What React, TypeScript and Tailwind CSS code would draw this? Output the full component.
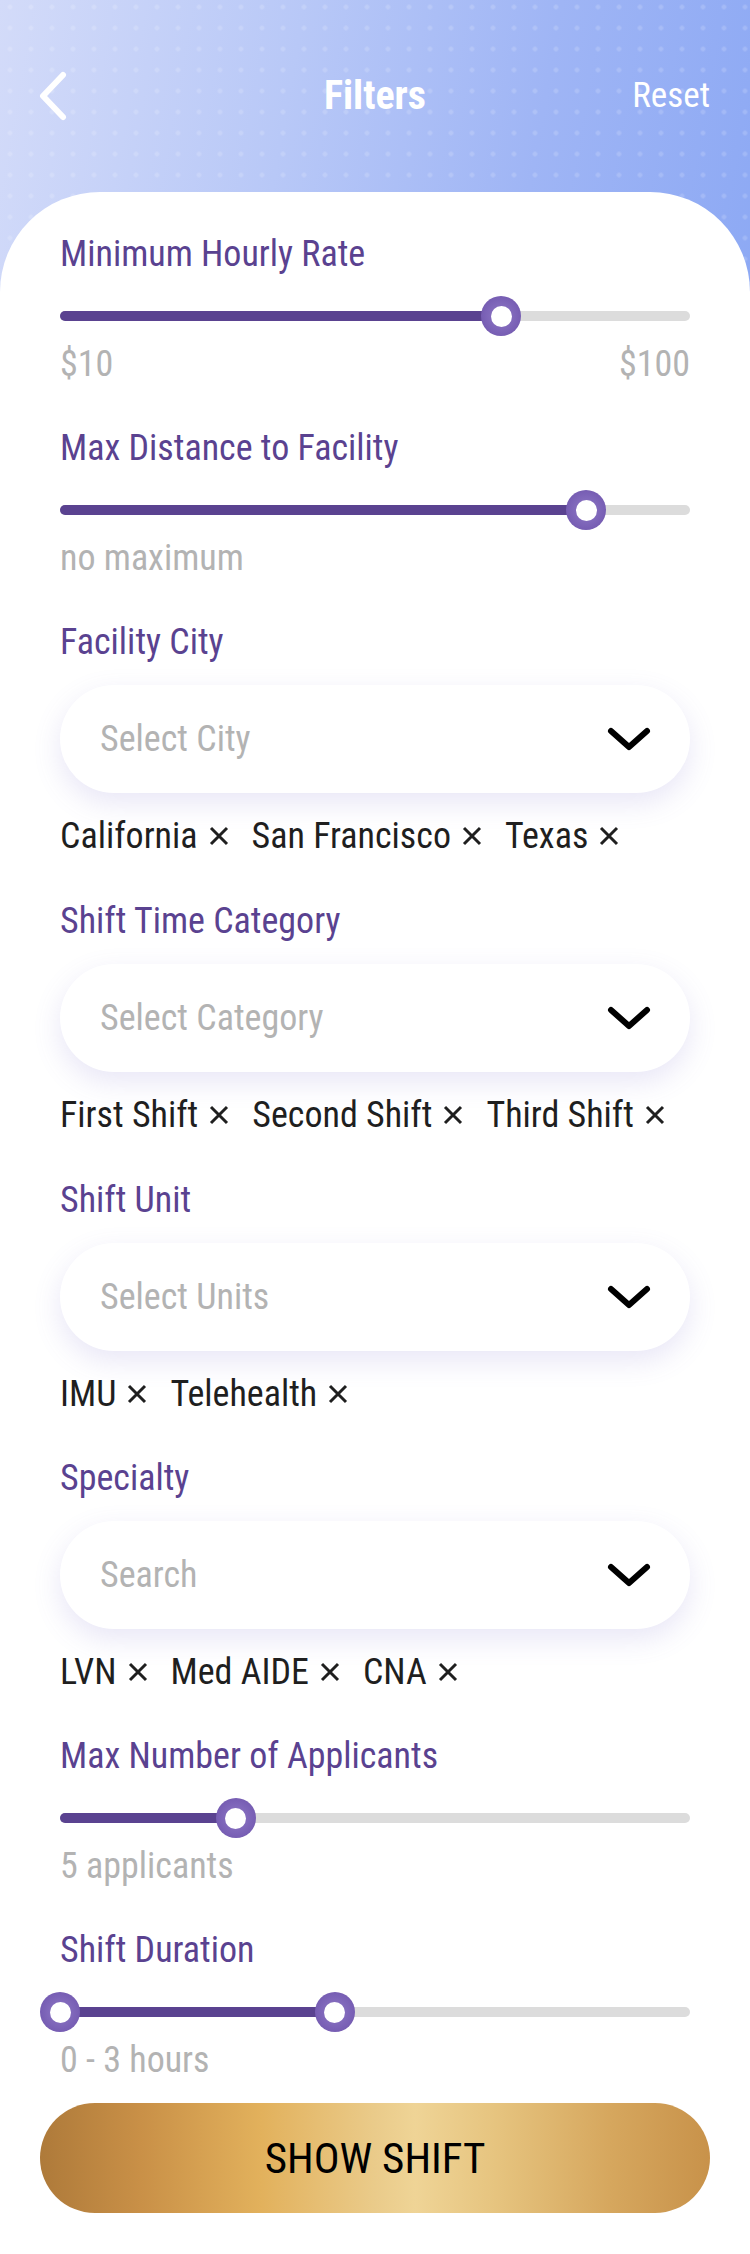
import React from "react";

const FONT = "font-['Roboto_Condensed','Liberation_Sans_Narrow',Roboto,sans-serif]";

function Label({ children }: { children: React.ReactNode }) {
  return <div className="text-[36px] leading-[40px] text-[#5a4290]">{children}</div>;
}

function Sub({ children, right }: { children: React.ReactNode; right?: React.ReactNode }) {
  return (
    <div className="mt-[8px] flex justify-between text-[36px] leading-[40px] text-[#b3b3b3]">
      <span>{children}</span>
      {right ? <span>{right}</span> : null}
    </div>
  );
}

function Thumb({ pct }: { pct: number }) {
  return (
    <div
      className="absolute top-1/2 flex h-[40px] w-[40px] -translate-x-1/2 -translate-y-1/2 items-center justify-center rounded-full bg-[radial-gradient(circle,#8f79c6_0%,#7a61b6_60%,#6c53a8_100%)]"
      style={{ left: `${pct}%` }}
    >
      <div className="h-[21px] w-[21px] rounded-full bg-white" />
    </div>
  );
}

function Slider({ from = 0, to, range = false }: { from?: number; to: number; range?: boolean }) {
  return (
    <div className="relative mt-[22px] h-[40px]">
      <div className="absolute left-0 right-0 top-1/2 h-[10px] -translate-y-1/2 rounded-full bg-[#dcdcdc]" />
      <div
        className="absolute top-1/2 h-[10px] -translate-y-1/2 rounded-full bg-[#5a4290]"
        style={{ left: `${from}%`, width: `${to - from}%` }}
      />
      {range ? <Thumb pct={from} /> : null}
      <Thumb pct={to} />
    </div>
  );
}

function XIcon() {
  return (
    <svg width="22" height="22" viewBox="0 0 22 22" className="shrink-0">
      <path d="M3 3 L19 19 M19 3 L3 19" stroke="#1f1f1f" strokeWidth="3" />
    </svg>
  );
}

function Dropdown({ placeholder, tags }: { placeholder: string; tags: string[] }) {
  return (
    <>
      <div className="mt-[23px] flex h-[108px] items-center justify-between rounded-full bg-white pl-[40px] pr-[38px] shadow-[0_10px_28px_rgba(110,100,200,0.16)]">
        <span className="text-[36px] leading-[40px] text-[#b3b3b3]">{placeholder}</span>
        <svg width="46" height="26" viewBox="0 0 46 26">
          <path d="M5 5 L23 21 L41 5" fill="none" stroke="#000" strokeWidth="6" strokeLinecap="round" strokeLinejoin="round" />
        </svg>
      </div>
      <div className="mt-[23px] flex items-center gap-[22px] text-[36px] leading-[40px] text-[#1f1f1f]">
        {tags.map((t) => (
          <div key={t} className="flex items-center gap-[10px]">
            <span>{t}</span>
            <XIcon />
          </div>
        ))}
      </div>
    </>
  );
}

export default function App() {
  return (
    <div className={`min-h-[2254px] w-[750px] bg-white ${FONT} [font-stretch:condensed]`}>
      <div className="h-[300px] bg-[radial-gradient(circle,rgba(255,255,255,0.16)_2px,transparent_2.6px),linear-gradient(100deg,#d3dbf9_0%,#b8c8f7_38%,#9fb5f5_70%,#8da9f4_100%)] bg-[length:21px_21px,100%_100%] bg-[position:-0.5px_-3.5px,0_0]">
        <div className="relative flex h-[192px] items-center justify-center">
          <svg className="absolute left-[36px] top-[70px]" width="36" height="54" viewBox="0 0 36 54">
            <path d="M27 5 L7 26 L27 47" fill="none" stroke="#fff" strokeWidth="6" strokeLinecap="round" strokeLinejoin="round" />
          </svg>
          <div className="text-[40px] font-bold leading-[44px] text-white">Filters</div>
          <div className="absolute right-[40px] top-[74px] text-[35px] leading-[44px] text-white">Reset</div>
        </div>
      </div>
      <div className="-mt-[108px] rounded-t-[100px] bg-white px-[60px] pb-[46px] pt-[42px]">
        <div className="flex flex-col">
          <Label>Minimum Hourly Rate</Label>
          <Slider to={70} />
          <Sub right="$100">$10</Sub>
        </div>
        <div className="mt-[44px] flex flex-col">
          <Label>Max Distance to Facility</Label>
          <Slider to={83.5} />
          <Sub>no maximum</Sub>
        </div>
        <div className="mt-[44px] flex flex-col">
          <Label>Facility City</Label>
          <Dropdown placeholder="Select City" tags={["California", "San Francisco", "Texas"]} />
        </div>
        <div className="mt-[45px] flex flex-col">
          <Label>Shift Time Category</Label>
          <Dropdown placeholder="Select Category" tags={["First Shift", "Second Shift", "Third Shift"]} />
        </div>
        <div className="mt-[45px] flex flex-col">
          <Label>Shift Unit</Label>
          <Dropdown placeholder="Select Units" tags={["IMU", "Telehealth"]} />
        </div>
        <div className="mt-[44px] flex flex-col">
          <Label>Specialty</Label>
          <Dropdown placeholder="Search" tags={["LVN", "Med AIDE", "CNA"]} />
        </div>
        <div className="mt-[44px] flex flex-col">
          <Label>Max Number of Applicants</Label>
          <Slider to={27.9} />
          <Sub>5 applicants</Sub>
        </div>
        <div className="mt-[44px] flex flex-col">
          <Label>Shift Duration</Label>
          <Slider from={0} to={43.6} range />
          <Sub>0 - 3 hours</Sub>
        </div>
        <div className="-mx-[20px] mt-[23px] flex h-[110px] items-center justify-center rounded-full bg-[linear-gradient(90deg,#ae7a3a_0%,#c99047_15%,#e2b15c_33%,#eacb8a_50%,#efd496_56%,#e6c47f_68%,#d6a75e_85%,#c8924a_100%)]">
          <span className="text-[43px] leading-[48px] text-black">SHOW SHIFT</span>
        </div>
      </div>
    </div>
  );
}
